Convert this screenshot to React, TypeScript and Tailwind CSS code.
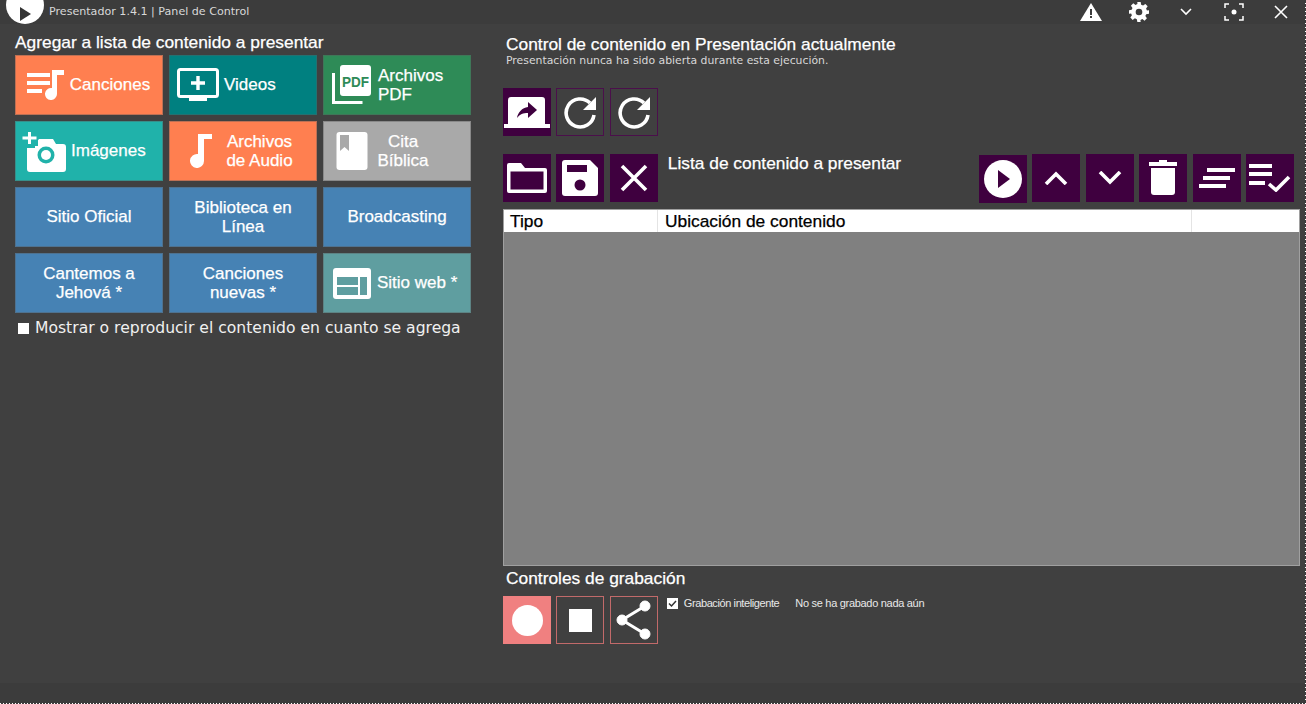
import type { ReactNode } from "react";

const WHITE = "#ffffff";

function Tile({ color, icon, children, textClass }: { color: string; icon?: ReactNode; children: ReactNode; textClass?: string }) {
  return (
    <div className={`h-[60px] w-[148px] flex items-center border border-[#5a5a5a]/40 ${color}`}>
      {icon}
      <div className={`flex-1 whitespace-nowrap text-center text-[17px] leading-[19px] pb-[1px] font-['Liberation_Sans',sans-serif] text-white [-webkit-text-stroke:0.25px_white] ${textClass ?? ""}`}>
        {children}
      </div>
    </div>
  );
}

function Square({ children, outline, color = "purple", className = "" }: { children: ReactNode; outline?: boolean; color?: "purple" | "red"; className?: string }) {
  let cls = "bg-[#3f003f]";
  if (color === "purple" && outline) cls = "border border-[#4b0f4b]";
  if (color === "red") cls = outline ? "border border-[#c26a6a]" : "bg-[#f08080]";
  return <div className={`w-12 h-12 flex items-center justify-center shrink-0 ${cls} ${className}`}>{children}</div>;
}

const SongsIcon = () => (
  <svg width="38" height="30" viewBox="0 0 38 30" className="ml-[11px] shrink-0" fill={WHITE}>
    <rect x="0" y="3" width="23" height="4" />
    <rect x="0" y="11" width="23" height="4" />
    <rect x="0" y="19" width="15" height="4" />
    <path d="M25 0h12v5h-7v19a6 6 0 1 1-5-5.9z" />
  </svg>
);

const VideoIcon = () => (
  <svg width="42" height="34" viewBox="0 0 42 34" className="ml-[7px] shrink-0" fill="none">
    <rect x="1.5" y="1.5" width="39" height="27" rx="2" stroke={WHITE} strokeWidth="3" />
    <rect x="12" y="29" width="18" height="4" fill={WHITE} />
    <path d="M21 8v14M14 15h14" stroke={WHITE} strokeWidth="3.4" />
  </svg>
);

const PdfIcon = () => (
  <svg width="40" height="40" viewBox="0 0 40 40" className="ml-[8px] shrink-0">
    <rect x="8" y="0" width="31" height="31" rx="3" fill={WHITE} />
    <path d="M1.5 8v29.5h29" fill="none" stroke={WHITE} strokeWidth="3" />
    <text x="23.5" y="22" textAnchor="middle" textLength="27" lengthAdjust="spacingAndGlyphs" fontFamily="'Liberation Sans', sans-serif" fontWeight="700" fontSize="15" fill="#2e8b57">PDF</text>
  </svg>
);

const CameraIcon = () => (
  <svg width="46" height="42" viewBox="0 0 46 42" className="ml-[5px] shrink-0">
    <path d="M6 14h8l4-5h14l3 5h7a3 3 0 0 1 3 3v22a3 3 0 0 1-3 3H9a3 3 0 0 1-3-3z" fill={WHITE} />
    <circle cx="25" cy="25" r="8.5" fill="#20b2aa" />
    <circle cx="25" cy="25" r="5" fill={WHITE} />
    <rect x="0" y="7" width="17" height="9" fill="#20b2aa" />
    <rect x="6" y="0" width="8" height="18" fill="#20b2aa" />
    <path d="M8.5 2v12M1.5 8h14" stroke={WHITE} strokeWidth="3" />
  </svg>
);

const NoteIcon = () => (
  <svg width="26" height="34" viewBox="0 0 26 34" className="ml-[17px] shrink-0" fill={WHITE}>
    <path d="M11 0h14v5h-8v22a7 7 0 1 1-6-6.9z" />
  </svg>
);

const BookIcon = () => (
  <svg width="32" height="38" viewBox="0 0 32 38" className="ml-[12px] shrink-0">
    <rect x="0.5" y="0" width="31" height="38" rx="3" fill={WHITE} />
    <path d="M4 3h9v16l-4.5-4-4.5 4z" fill="#a9a9a9" />
  </svg>
);

const WebIcon = () => (
  <svg width="38" height="31" viewBox="0 0 38 31" className="ml-[9px] shrink-0">
    <rect x="0" y="0" width="38" height="31" rx="3" fill={WHITE} />
    <rect x="4" y="9" width="21" height="8" fill="#5f9ea0" />
    <rect x="4" y="19" width="21" height="8" fill="#5f9ea0" />
    <rect x="27" y="9" width="7" height="18" fill="#5f9ea0" />
  </svg>
);

const RedoIcon = () => (
  <svg width="34" height="34" viewBox="0 0 34 34" fill="none">
    <path d="M31 20A14 14 0 1 1 27 8" stroke={WHITE} strokeWidth="3.6" />
    <path d="M33 2v13H20z" fill={WHITE} />
  </svg>
);

export default function App() {
  return (
    <div className="relative h-[704px] w-[1306px] overflow-hidden bg-[#404040] flex flex-col">
      {/* barra de titulo */}
      <div className="h-6 flex items-center bg-[#3c3c3c] shrink-0 overflow-hidden">
        <div className="ml-[6px] w-[38px] h-[38px] -mt-[14px] rounded-full bg-white flex items-center justify-center shrink-0">
          <svg width="11" height="14" viewBox="0 0 11 14" className="mt-[18px] ml-[1px]"><path d="M0 0l11 7-11 7z" fill="#333" /></svg>
        </div>
        <span className="ml-[5px] text-[11.1px] text-[#d8d8d8] font-['DejaVu_Sans',sans-serif]">Presentador 1.4.1 | Panel de Control</span>
        <div className="flex-1" />
        <svg width="22" height="18" viewBox="0 0 22 18" className="mr-[27px]">
          <path d="M11 0l11 18H0z" fill={WHITE} />
          <rect x="10" y="6" width="2" height="6" fill="#3c3c3c" />
          <rect x="10" y="13" width="2" height="2" fill="#3c3c3c" />
        </svg>
        <svg width="20" height="20" viewBox="0 0 24 24" className="mr-[31px]" fill={WHITE}>
          <path fillRule="evenodd" d="M10 0h4l.6 3.2 2.3 1 2.7-1.9 2.8 2.8-1.9 2.7 1 2.3L24 10v4l-3.4.6-1 2.3 1.9 2.7-2.8 2.8-2.7-1.9-2.3 1L14 24h-4l-.6-3.4-2.3-1-2.7 1.9-2.8-2.8 1.9-2.7-1-2.3L0 14v-4l3.2-.6 1-2.3-1.9-2.7 2.8-2.8 2.7 1.9 2.3-1zM12 8a4 4 0 1 0 0 8 4 4 0 0 0 0-8z" />
        </svg>
        <svg width="12" height="8" viewBox="0 0 12 8" className="mr-[32px]" fill="none"><path d="M1 1l5 5 5-5" stroke={WHITE} strokeWidth="1.6" /></svg>
        <svg width="20" height="18" viewBox="0 0 20 18" className="mr-[30px]" fill="none">
          <path d="M1 5V1h4M15 1h4v4M19 13v4h-4M5 17H1v-4" stroke={WHITE} strokeWidth="1.5" />
          <circle cx="10" cy="9" r="2.5" fill={WHITE} />
        </svg>
        <svg width="14" height="14" viewBox="0 0 14 14" className="mr-[18px]" fill="none"><path d="M1 1l12 12M13 1L1 13" stroke={WHITE} strokeWidth="1.6" /></svg>
      </div>

      <div className="flex h-[659px] shrink-0">
        {/* columna izquierda */}
        <div className="w-[503px] pl-[15px] shrink-0">
          <div className="mt-[9px] h-[22px] leading-[18px] text-[17.35px] font-['Liberation_Sans',sans-serif] text-white [-webkit-text-stroke:0.25px_white]">
            Agregar a lista de contenido a presentar
          </div>
          <div className="grid grid-cols-[148px_148px_148px] gap-[6px]">
            <Tile color="bg-[#ff7f50]" icon={<SongsIcon />} textClass="pr-[7px]">Canciones</Tile>
            <Tile color="bg-[#008080]" icon={<VideoIcon />} textClass="text-left pl-[5px]">Videos</Tile>
            <Tile color="bg-[#2e8b57]" icon={<PdfIcon />} textClass="text-left pl-[6px]">Archivos<br />PDF</Tile>
            <Tile color="bg-[#20b2aa]" icon={<CameraIcon />} textClass="text-left pl-[4px]">Imágenes</Tile>
            <Tile color="bg-[#ff7f50]" icon={<NoteIcon />} textClass="pr-[10px]">Archivos<br />de Audio</Tile>
            <Tile color="bg-[#a9a9a9]" icon={<BookIcon />} textClass="pr-[32px]">Cita<br />Bíblica</Tile>
            <Tile color="bg-[#4682b4]">Sitio Oficial</Tile>
            <Tile color="bg-[#4682b4]">Biblioteca en<br />Línea</Tile>
            <Tile color="bg-[#4682b4]">Broadcasting</Tile>
            <Tile color="bg-[#4682b4]">Cantemos a<br />Jehová *</Tile>
            <Tile color="bg-[#4682b4]">Canciones<br />nuevas *</Tile>
            <Tile color="bg-[#5f9ea0]" icon={<WebIcon />} textClass="text-left pl-[6px]">Sitio web *</Tile>
          </div>
          <div className="mt-[5px] flex items-center h-5 pl-[3px]">
            <div className="w-[11px] h-[11px] bg-white shrink-0" />
            <span className="ml-[6px] pt-[1px] text-[15.6px] text-[#f0f0f0] whitespace-nowrap font-['DejaVu_Sans',sans-serif]">Mostrar o reproducir el contenido en cuanto se agrega</span>
          </div>
        </div>

        {/* columna derecha */}
        <div className="w-[797px] shrink-0">
          <div className="ml-[3px] mt-[11px] h-[18px] leading-[18px] text-[17.35px] font-['Liberation_Sans',sans-serif] text-white [-webkit-text-stroke:0.25px_white]">
            Control de contenido en Presentación actualmente
          </div>
          <div className="ml-[3px] mt-[1px] h-[13px] leading-[13px] text-[10.85px] text-[#d8d8d8] font-['DejaVu_Sans',sans-serif]">
            Presentación nunca ha sido abierta durante esta ejecución.
          </div>
          <div className="mt-[21px] flex gap-[5.4px]">
            <Square>
              <svg width="46" height="31" viewBox="0 0 46 31">
                <path d="M4 3a3 3 0 0 1 3-3h31a3 3 0 0 1 3 3v24h5v4H0v-4h4z" fill={WHITE} />
                <path d="M24 5l9 8-9 8v-5c-5 0-8 1-11 5 1-6 5-10 11-11z" fill="#3f003f" />
              </svg>
            </Square>
            <Square outline><RedoIcon /></Square>
            <Square outline><RedoIcon /></Square>
          </div>
          <div className="mt-[18px] flex h-12">
            <div className="flex gap-[5.4px]">
              <Square>
                <svg width="40" height="30" viewBox="0 0 40 30">
                  <path d="M2 0h12l4 5h20a2 2 0 0 1 2 2v21a2 2 0 0 1-2 2H2a2 2 0 0 1-2-2V2a2 2 0 0 1 2-2z" fill={WHITE} />
                  <rect x="3.5" y="8.5" width="33" height="18" fill="#3f003f" />
                </svg>
              </Square>
              <Square>
                <svg width="36" height="36" viewBox="0 0 36 36">
                  <path d="M3 0h25l8 8v25a3 3 0 0 1-3 3H3a3 3 0 0 1-3-3V3a3 3 0 0 1 3-3z" fill={WHITE} />
                  <rect x="5" y="5" width="20" height="7" fill="#3f003f" />
                  <circle cx="18" cy="25" r="5.5" fill="#3f003f" />
                </svg>
              </Square>
              <Square>
                <svg width="28" height="28" viewBox="0 0 28 28" fill="none"><path d="M2 2l24 24M26 2L2 26" stroke={WHITE} strokeWidth="3.6" /></svg>
              </Square>
            </div>
            <div className="ml-[10px] h-[18px] leading-[18px] text-[17.35px] font-['Liberation_Sans',sans-serif] text-white [-webkit-text-stroke:0.25px_white]">
              Lista de contenido a presentar
            </div>
            <div className="ml-auto mr-[6px] flex gap-[5.4px]">
              <Square className="mt-[1px]">
                <svg width="40" height="40" viewBox="0 0 40 40">
                  <circle cx="20" cy="20" r="19" fill={WHITE} />
                  <path d="M15 11l12 9-12 9z" fill="#3f003f" />
                </svg>
              </Square>
              <Square>
                <svg width="24" height="14" viewBox="0 0 24 14" fill="none"><path d="M2 13L12 3l10 10" stroke={WHITE} strokeWidth="3.6" /></svg>
              </Square>
              <Square>
                <svg width="24" height="14" viewBox="0 0 24 14" fill="none"><path d="M2 1l10 10L22 1" stroke={WHITE} strokeWidth="3.6" /></svg>
              </Square>
              <Square>
                <svg width="28" height="36" viewBox="0 0 28 36" fill={WHITE}>
                  <rect x="0" y="2" width="28" height="4" />
                  <rect x="10" y="0" width="8" height="3" />
                  <path d="M2 8h24v24a3 3 0 0 1-3 3H5a3 3 0 0 1-3-3z" />
                </svg>
              </Square>
              <Square>
                <svg width="36" height="20" viewBox="0 0 36 20" fill={WHITE}>
                  <rect x="8" y="0" width="28" height="4" />
                  <rect x="4" y="8" width="27" height="4" />
                  <rect x="0" y="16" width="27" height="4" />
                </svg>
              </Square>
              <Square>
                <svg width="42" height="28" viewBox="0 0 42 28" fill="none">
                  <path d="M0 2h23M0 10h23M0 19h16" stroke={WHITE} strokeWidth="4" />
                  <path d="M20 20l7 6 13-13" stroke={WHITE} strokeWidth="3.6" />
                </svg>
              </Square>
            </div>
          </div>

          {/* tabla */}
          <div className="mt-[7px] w-[797px] h-[357px] bg-[#808080] border border-[#a0a0a0] flex flex-col">
            <div className="h-[22px] bg-white flex items-center text-[17.35px] text-black font-['Liberation_Sans',sans-serif] [-webkit-text-stroke:0.25px_black] shrink-0">
              <div className="w-[154px] h-full pl-[6px] border-r border-[#e4e4e4] leading-[22px]">Tipo</div>
              <div className="w-[534px] h-full pl-[7px] border-r border-[#e4e4e4] leading-[22px]">Ubicación de contenido</div>
            </div>
          </div>

          <div className="ml-[3px] mt-[3px] h-[18px] leading-[18px] text-[17.35px] font-['Liberation_Sans',sans-serif] text-white [-webkit-text-stroke:0.25px_white]">
            Controles de grabación
          </div>
          <div className="mt-[9px] flex">
            <div className="flex gap-[5.4px]">
              <Square color="red"><div className="w-[31px] h-[31px] rounded-full bg-white" /></Square>
              <Square color="red" outline><div className="w-[23px] h-[23px] bg-white" /></Square>
              <Square color="red" outline>
                <svg width="38" height="40" viewBox="0 0 38 40" fill={WHITE} stroke={WHITE}>
                  <path d="M30 6L7 20l23 14" fill="none" strokeWidth="3" />
                  <circle cx="30" cy="6" r="5" />
                  <circle cx="7" cy="20" r="5" />
                  <circle cx="30" cy="34" r="5" />
                </svg>
              </Square>
            </div>
            <div className="ml-[9px] mt-[1px] h-[13px] flex items-center text-[11px] text-[#e8e8e8] font-['Liberation_Sans',sans-serif] whitespace-nowrap">
              <div className="w-[11px] h-[11px] bg-white flex items-center justify-center shrink-0">
                <svg width="9" height="9" viewBox="0 0 9 9" fill="none"><path d="M1 4.5l2.5 2.5L8 2" stroke="#333" strokeWidth="1.5" /></svg>
              </div>
              <span className="ml-[6px] tracking-[-0.4px]">Grabación inteligente</span>
              <span className="ml-[16px] tracking-[-0.3px]">No se ha grabado nada aún</span>
            </div>
          </div>
        </div>
      </div>

      {/* franja inferior */}
      <div className="flex-1 bg-[#3c3c3c]" />
      <div className="absolute left-0 right-0 bottom-0 h-px bg-[repeating-linear-gradient(90deg,#ffffff_0_1px,#3c3c3c_1px_3px)]" />
      <div className="absolute top-0 bottom-0 right-0 w-px bg-[repeating-linear-gradient(0deg,#ffffff_0_1px,#3c3c3c_1px_4px)]" />
    </div>
  );
}
